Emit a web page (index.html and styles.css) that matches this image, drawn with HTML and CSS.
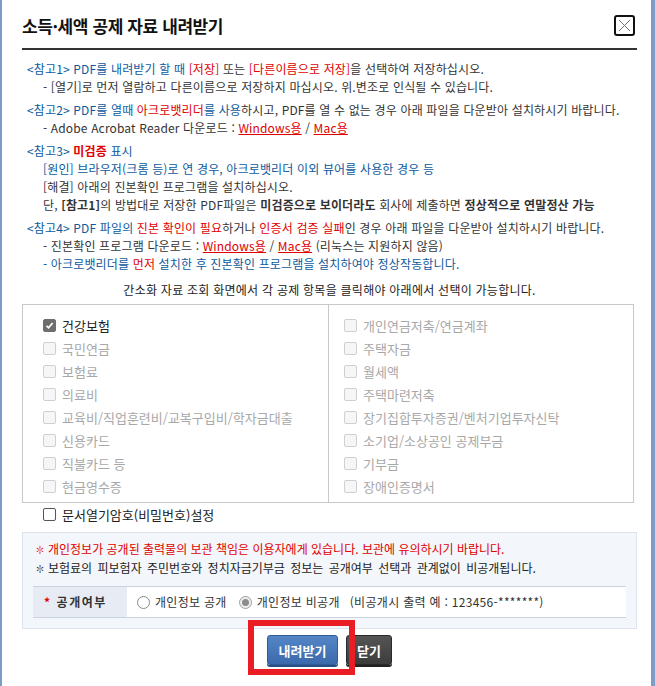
FILE: index.html
```html
<!DOCTYPE html>
<html lang="ko">
<head>
    <meta charset="UTF-8">
    <title>소득·세액 공제 자료 내려받기</title>
    <link rel="stylesheet" href="styles.css">
</head>
<body>
<div class="window">
    <div class="header">
        <h1>소득·세액 공제 자료 내려받기</h1>
        <button type="button" class="close" title="닫기">
            <svg width="17" height="17" viewBox="0 0 17 17"><path d="M3 3L14 14M14 3L3 14" stroke="#6b7280" stroke-width="1" fill="none"/></svg>
        </button>
    </div>

    <!-- 안내 문구 -->
    <div class="notes">
        <div class="group">
            <p><span class="blue">&lt;참고1&gt; PDF를 내려받기 할 때 </span><span class="red">[저장]</span> 또는 <span class="red">[다른이름으로 저장]</span>을 선택하여 저장하십시오.</p>
            <p class="sub">- [열기]로 먼저 열람하고 다른이름으로 저장하지 마십시오. 위.변조로 인식될 수 있습니다.</p>
        </div>
        <div class="group">
            <p><span class="blue">&lt;참고2&gt; PDF를 열때 </span><span class="red">아크로뱃리더</span><span class="blue">를 사용</span>하시고, PDF를 열 수 없는 경우 아래 파일을 다운받아 설치하시기 바랍니다.</p>
            <p class="sub">- Adobe Acrobat Reader 다운로드 : <a href="#">Windows용</a> / <a href="#">Mac용</a></p>
        </div>
        <div class="group">
            <p><span class="blue">&lt;참고3&gt; </span><b class="red">미검증</b><span class="blue"> 표시</span></p>
            <p class="sub blue">[원인] 브라우저(크롬 등)로 연 경우, 아크로뱃리더 이외 뷰어를 사용한 경우 등</p>
            <p class="sub">[해결] 아래의 진본확인 프로그램을 설치하십시오.</p>
            <p class="sub">단, <b>[참고1]</b>의 방법대로 저장한 PDF파일은 <b>미검증으로 보이더라도</b> 회사에 제출하면 <b>정상적으로 연말정산 가능</b></p>
        </div>
        <div class="group">
            <p><span class="blue">&lt;참고4&gt; PDF 파일의 </span><span class="red">진본 확인이 필요</span>하거나 <span class="red">인증서 검증 실패</span>인 경우 아래 파일을 다운받아 설치하시기 바랍니다.</p>
            <p class="sub">- 진본확인 프로그램 다운로드 : <a href="#">Windows용</a> / <a href="#">Mac용</a> (리눅스는 지원하지 않음)</p>
            <p class="sub blue">- 아크로뱃리더를 <span class="red">먼저</span> 설치한 후 진본확인 프로그램을 설치하여야 정상작동합니다.</p>
        </div>
    </div>

    <p class="guide">간소화 자료 조회 화면에서 각 공제 항목을 클릭해야 아래에서 선택이 가능합니다.</p>

    <!-- 공제 항목 선택 -->
    <div class="items">
        <ul class="col">
            <li class="on"><span class="chk checked"><svg width="9" height="9" viewBox="0 0 9 9"><path d="M1.5 4.8L3.6 6.8L7.6 2" stroke="#fff" stroke-width="1.8" fill="none"/></svg></span>건강보험</li>
            <li><span class="chk"></span>국민연금</li>
            <li><span class="chk"></span>보험료</li>
            <li><span class="chk"></span>의료비</li>
            <li><span class="chk"></span>교육비/직업훈련비/교복구입비/학자금대출</li>
            <li><span class="chk"></span>신용카드</li>
            <li><span class="chk"></span>직불카드 등</li>
            <li><span class="chk"></span>현금영수증</li>
        </ul>
        <ul class="col">
            <li><span class="chk"></span>개인연금저축/연금계좌</li>
            <li><span class="chk"></span>주택자금</li>
            <li><span class="chk"></span>월세액</li>
            <li><span class="chk"></span>주택마련저축</li>
            <li><span class="chk"></span>장기집합투자증권/벤처기업투자신탁</li>
            <li><span class="chk"></span>소기업/소상공인 공제부금</li>
            <li><span class="chk"></span>기부금</li>
            <li><span class="chk"></span>장애인증명서</li>
        </ul>
    </div>

    <label class="pw"><span class="chk enabled"></span>문서열기암호(비밀번호)설정</label>

    <!-- 개인정보 공개여부 -->
    <div class="privacy">
        <p class="red"><span class="bullet">✽</span>개인정보가 공개된 출력물의 보관 책임은 이용자에게 있습니다. 보관에 유의하시기 바랍니다.</p>
        <p class="wide"><span class="bullet">✽</span>보험료의 피보험자 주민번호와 정치자금기부금 정보는 공개여부 선택과 관계없이 비공개됩니다.</p>
        <div class="row">
            <div class="th"><span class="star">*</span>공개여부</div>
            <div class="td">
                <span class="radio"></span>개인정보 공개
                <span class="radio checked"></span>개인정보 비공개
                <span class="ex">(비공개시 출력 예 : 123456-*******)</span>
            </div>
        </div>
    </div>

    <div class="buttons">
        <button type="button" class="btn primary">내려받기</button>
        <button type="button" class="btn dark">닫기</button>
        <div class="highlight"></div>
    </div>
</div>
</body>
</html>
```

FILE: styles.css
```css
body {
    margin: 0;
    background-color: #FFFFFF;
    font-family: "Noto Sans CJK KR", "Noto Sans", sans-serif;
    color: #222222;
}
p, ul, h1 {
    margin: 0;
    padding: 0;
}
.window {
    height: 686px;
    box-sizing: border-box;
    border-left: 2px solid #7d9ccb;
    border-right: 4px solid #7d9ccb; /* popup window frame */
    padding: 0 14px 0 20px;
}
.header {
    display: flex;
    align-items: center;
    justify-content: space-between;
    padding-top: 2px;
    box-sizing: border-box;
    border-bottom: 2px solid #333333;
    height: 50px;
}
h1 {
    font-size: 17px;
    font-weight: bold;
    color: #111111;
    letter-spacing: -0.4px;
}
.close {
    width: 21px;
    height: 21px;
    padding: 0;
    margin-right: 2px;
    border: 2px solid #111111;
    border-radius: 3px;
    background-color: #FFFFFF;
    display: flex;
    align-items: center;
    justify-content: center;
    cursor: pointer;
}
.notes {
    padding: 5px 0 0 5px;
    font-size: 12px;
    line-height: 18px;
    letter-spacing: 0.15px;
    color: #333333;
}
.group {
    margin-top: 5px;
}
.sub {
    padding-left: 16px;
}
.blue {
    color: #0d5a9e;
}
.red {
    color: #e00000;
}
.notes a {
    color: #e00000;
    text-decoration: underline;
}
.guide {
    margin-top: 8px;
    text-align: center;
    font-size: 12px;
    line-height: 18px;
    letter-spacing: 0.25px;
    color: #222222;
}
.items {
    display: grid;
    grid-template-columns: 305px 1fr;
    margin: 5px 3px 0 0;
    border: 1px solid #c8c8c8;
}
.col {
    list-style: none;
    padding: 9px 0 4px 20px;
}
.col + .col {
    border-left: 1px solid #c8c8c8;
    padding-left: 15px;
}
.col li {
    display: flex;
    align-items: center;
    height: 23px;
    font-size: 13px;
    color: #a8a8a8;
}
.col li.on {
    color: #222222;
}
.chk {
    width: 13px;
    height: 13px;
    box-sizing: border-box;
    border: 1px solid #d0d0d0;
    border-radius: 2px;
    background-color: #f6f6f6;
    margin-right: 6px;
    display: inline-flex;
    align-items: center;
    justify-content: center;
    flex: none;
}
.chk.checked {
    background-color: #6e6e6e;
    border-color: #6e6e6e;
}
.chk.enabled {
    border: 1px solid #555555;
    background-color: #FFFFFF;
}
.pw {
    display: flex;
    align-items: center;
    height: 22px;
    padding-left: 21px;
    font-size: 13px;
    color: #222222;
}
.privacy {
    margin-top: 7px;
    padding: 7px 10px 10px 10px;
    background-color: #f3f6fa;
    border: 1px solid #dde4ed;
    font-size: 12px;
    line-height: 18px;
    color: #222222;
}
.privacy p {
    padding-left: 2px;
}
.privacy .wide {
    word-spacing: 2px;
}
.bullet {
    display: inline-block;
    width: 13px;
    font-size: 10px;
}
.row {
    display: flex;
    margin-top: 8px;
    height: 32px;
    box-sizing: border-box;
    border-top: 1px solid #cbd3de;
    border-bottom: 1px solid #cbd3de;
}
.th {
    width: 94px;
    background-color: #e7ecf4;
    display: flex;
    align-items: center;
    padding-left: 11px;
    box-sizing: border-box;
    font-weight: bold;
    font-size: 12px;
    letter-spacing: 1.5px;
    color: #333333;
}
.star {
    color: #e00000;
    margin-right: 5px;
}
.td {
    flex: 1;
    background-color: #FFFFFF;
    display: flex;
    align-items: center;
    padding-left: 10px;
    letter-spacing: 0.3px;
    color: #333333;
}
.radio {
    width: 13px;
    height: 13px;
    box-sizing: border-box;
    border: 1px solid #8a8a8a;
    border-radius: 50%;
    background-color: #FFFFFF;
    margin-right: 5px;
    display: inline-flex;
    align-items: center;
    justify-content: center;
}
.radio.checked {
    margin-left: 12px;
    border-color: #a0a0a0;
    background-color: #eeeeee;
}
.radio.checked::after {
    content: "";
    width: 7px;
    height: 7px;
    border-radius: 50%;
    background-color: #8c8c8c;
}
.ex {
    margin-left: 10px;
}
.buttons {
    position: relative;
    display: flex;
    justify-content: center;
    gap: 8px;
    margin-top: 6px;
}
.btn {
    height: 30px;
    border-radius: 3px;
    color: #FFFFFF;
    font-family: "Noto Sans CJK KR", sans-serif;
    font-size: 13px;
    font-weight: bold;
    cursor: pointer;
}
.primary {
    width: 71px;
    background: linear-gradient(#5486c7, #3b6aab);
    border: 1px solid #2f5c98;
    box-shadow: 0 2px 0 #284f84;
}
.dark {
    width: 46px;
    background: linear-gradient(#555555, #3c3c3c);
    border: 1px solid #2a2a2a;
    box-shadow: 0 2px 0 #222222;
}
/* annotation box drawn over the download button */
.highlight {
    position: absolute;
    left: 226px;
    top: -15px;
    width: 107px;
    height: 55px;
    box-sizing: border-box;
    border: 6px solid #ea1c24;
}
```
